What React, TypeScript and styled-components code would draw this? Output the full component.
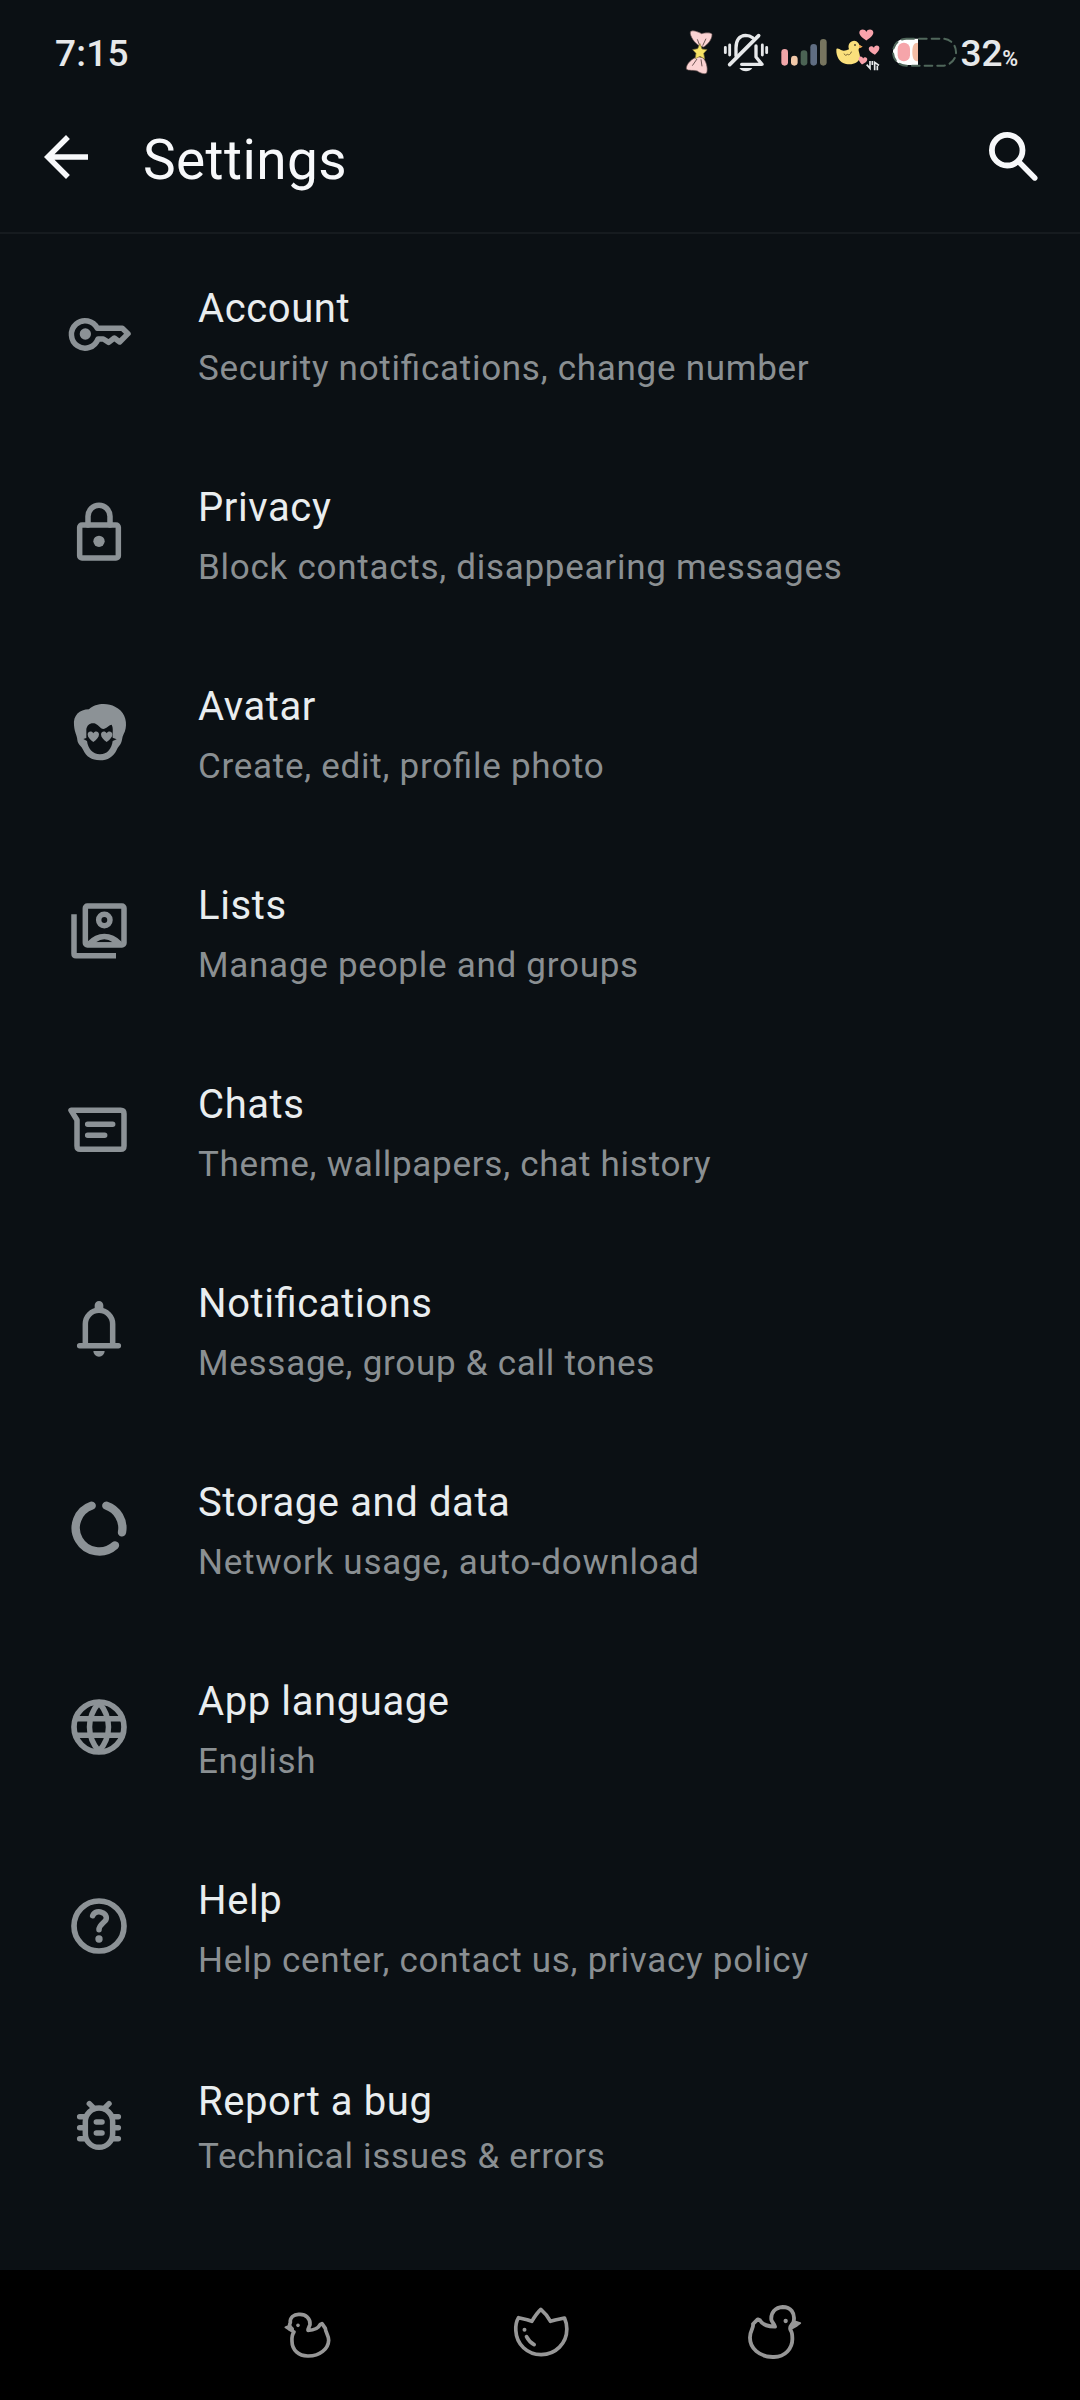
import React from "react";
import styled, { createGlobalStyle } from "styled-components";
import { MdArrowBack } from "react-icons/md";

const GlobalStyle = createGlobalStyle`
  * { box-sizing: border-box; }
  html, body { margin: 0; background: #0b1014; }
  body { font-family: Roboto, "Noto Sans", sans-serif; }
`;

const Screen = styled.div`
  width: 1080px;
  height: 2400px;
  display: flex;
  flex-direction: column;
  overflow: hidden;
  background: #0b1014;
`;

const StatusBar = styled.header`
  height: 96px;
  flex: none;
  display: flex;
  align-items: flex-start;
  justify-content: space-between;
  padding: 0 61px 0 55px;
  color: #e6e8ea;
`;

const Clock = styled.span`
  margin-top: 32px;
  font-size: 37px;
  line-height: 44px;
  font-weight: 500;
  letter-spacing: 0.2px;
`;

const StatusIcons = styled.div`
  display: flex;
  align-items: flex-start;
`;

const StatusGlyph = styled.svg`
  display: block;
  flex: none;
  height: 96px;
`;

const BatteryText = styled.span`
  width: 61px;
  padding-left: 2.5px;
  margin-top: 32px;
  font-size: 37px;
  line-height: 44px;
  font-weight: 500;
  white-space: nowrap;
  letter-spacing: -0.1px;
`;

const Percent = styled.small`
  font-size: 21.5px;
  font-weight: 600;
`;

const AppBar = styled.div`
  height: 138px;
  flex: none;
  display: flex;
  align-items: flex-start;
  padding: 28px 33px 0;
  border-bottom: 2px solid #161b1f;
  color: #f7f8fa;
`;

const BarButton = styled.button`
  width: 66px;
  height: 66px;
  padding: 0;
  border: 0;
  background: none;
  color: inherit;
  svg { display: block; }
`;

const PageTitle = styled.h1`
  flex: 1;
  margin: 4px 0 0 44px;
  font-size: 55px;
  line-height: 64px;
  font-weight: 400;
  letter-spacing: 0.4px;
`;

const SettingsList = styled.ul`
  flex: 1;
  margin: 0;
  padding: 0;
  list-style: none;
`;

const SettingRow = styled.li`
  height: 199px;
  display: flex;
  align-items: center;
  padding-left: 66px;
`;

const RowIcon = styled.svg`
  width: 66px;
  height: 66px;
  flex: none;
  color: #8c9296;
`;

const RowText = styled.div<{ $compact?: boolean }>`
  height: 199px;
  margin-left: 66px;
  padding-top: ${(p) => (p.$compact ? 52 : 50)}px;
  display: flex;
  flex-direction: column;
  gap: ${(p) => (p.$compact ? 7 : 12)}px;
  white-space: nowrap;
  font-feature-settings: "liga" 1;
`;

const RowTitle = styled.span`
  font-size: 40px;
  line-height: 50px;
  letter-spacing: 0.6px;
  color: #e9edef;
`;

const RowSubtitle = styled.span`
  font-size: 35px;
  line-height: 46px;
  letter-spacing: 0.73px;
  color: #8a8f92;
`;

const NavBar = styled.nav`
  height: 130px;
  flex: none;
  display: flex;
  justify-content: space-between;
  padding: 30px 257px 0 270px;
  background: #000;
`;

const NavGlyph = styled.svg`
  width: 80px;
  height: 70px;
  fill: none;
  stroke: #979797;
  stroke-width: 11;
  stroke-linecap: round;
  stroke-linejoin: round;
`;

const line = {
  fill: "none",
  stroke: "currentColor",
  strokeWidth: 16.5,
  strokeLinecap: "round" as const,
  strokeLinejoin: "round" as const,
};

type Setting = {
  title: string;
  subtitle: string;
  viewBox: string;
  icon: React.ReactNode;
  compact?: boolean;
};

const settings: Setting[] = [
  {
    title: "Account",
    subtitle: "Security notifications, change number",
    viewBox: "78 93 198 198",
    icon: (
      <>
        <path {...line} d="M172 175H247L264 191L239 216L223 204L206 217L190 207H174A41 41 0 1 1 172 175Z" />
        <circle cx="136" cy="192" r="17" fill="currentColor" />
      </>
    ),
  },
  {
    title: "Privacy",
    subtitle: "Block contacts, disappearing messages",
    viewBox: "78 690 198 198",
    icon: (
      <>
        <rect {...line} x="119" y="765" width="116" height="99" rx="7" />
        <path {...line} d="M144 765V739A33 33 0 0 1 210 739V765" />
        <circle cx="177" cy="814" r="17" fill="currentColor" />
      </>
    ),
  },
  {
    title: "Avatar",
    subtitle: "Create, edit, profile photo",
    viewBox: "78 87 198 198",
    icon: (
      <>
        <path
          fill="currentColor"
          fillRule="evenodd"
          d="M102 166C99 136 118 119 147 118C165 99 204 98 225 110C251 121 262 150 257 175C255 189 247 196 246 209C243 225 236 226 230 240C220 261 203 271 180 271C154 271 139 260 130 241C124 226 114 225 112 210C111 195 104 190 102 166Z M139 204L130 207L141 213C144 235 158 253 180 253C202 253 215 236 218 213L230 208L218 203C217 188 221 176 215 164C206 165 199 176 190 177C181 177 173 162 163 160C149 158 141 166 139 178Z"
        />
        <path
          fill="currentColor"
          d="M160 216C150 209 143 202 143 193C143 183 156 181 160 190C164 181 177 183 177 193C177 202 170 209 160 216ZM200 216C190 209 183 202 183 193C183 183 196 181 200 190C204 181 217 183 217 193C217 202 210 209 200 216Z"
        />
      </>
    ),
  },
  {
    title: "Lists",
    subtitle: "Manage people and groups",
    viewBox: "78 684 198 198",
    icon: (
      <>
        <rect {...line} x="136" y="708" width="116" height="117" rx="6" />
        <path {...line} strokeLinecap="butt" d="M102 733V851Q102 857 108 857H228" />
        <circle {...line} cx="193" cy="750" r="17" />
        <path
          fill="currentColor"
          fillRule="evenodd"
          d="M142 815Q165 791 193 791Q222 791 245 815V825H142ZM168 817Q193 799 218 817Z"
        />
      </>
    ),
  },
  {
    title: "Chats",
    subtitle: "Theme, wallpapers, chat history",
    viewBox: "78 81 198 198",
    icon: (
      <>
        <path {...line} d="M93 121H242Q252 121 252 131V228Q252 238 242 238H121Q111 238 111 228V150Z" />
        <path {...line} d="M143 163H218M143 196H194" />
      </>
    ),
  },
  {
    title: "Notifications",
    subtitle: "Message, group & call tones",
    viewBox: "78 678 198 198",
    icon: (
      <>
        <path {...line} d="M119 827H235M136 827V762A41 41 0 0 1 218 762V827" />
        <path fill="currentColor" d="M164 722V706A13 13 0 0 1 190 706V722ZM160 843H194A17 17 0 0 1 160 843Z" />
      </>
    ),
  },
  {
    title: "Storage and data",
    subtitle: "Network usage, auto-download",
    viewBox: "78 45 198 198",
    icon: (
      <path
        {...line}
        strokeWidth={25}
        d="M155 77A70.5 70.5 0 1 0 225 196M199 77A70.5 70.5 0 0 1 246 157"
      />
    ),
  },
  {
    title: "App language",
    subtitle: "English",
    viewBox: "78 642 198 198",
    icon: (
      <>
        <circle {...line} cx="177" cy="741" r="75" strokeWidth={17} />
        <path {...line} d="M107 716H247M107 766H247M177 668C139 712 139 770 177 814C215 770 215 712 177 668Z" />
      </>
    ),
  },
  {
    title: "Help",
    subtitle: "Help center, contact us, privacy policy",
    viewBox: "78 69 198 198",
    icon: (
      <>
        <circle {...line} cx="177" cy="168" r="75" strokeWidth={17} />
        <path {...line} d="M158 137C163 124 178 124 184 127C199 131 203 145 195 153C187 162 177 166 177 179" />
        <circle cx="177" cy="207" r="11" fill="currentColor" />
      </>
    ),
  },
  {
    title: "Report a bug",
    subtitle: "Technical issues & errors",
    compact: true,
    viewBox: "78 666 198 198",
    icon: (
      <>
        <rect {...line} x="136" y="714" width="82" height="118" rx="41" />
        <path
          {...line}
          d="M119 740H134M119 773H134M119 806H134M220 740H235M220 773H235M220 806H235M148 701L163 716M207 701L192 716M169 756H186M169 789H186"
        />
      </>
    ),
  },
];

const heart = "M0 9C-7 4-10 0-10-4C-10-10-2-11 0-5C2-11 10-10 10-4C10 0 7 4 0 9Z";

const BowIcon = () => (
  <StatusGlyph width="37" viewBox="68 -30 111 288">
    <g stroke="#6d5654" strokeWidth="2" strokeLinejoin="round">
      <path fill="#fbd3d3" d="M118 108C103 100 88 78 90 66C96 58 113 66 124 71C134 68 152 67 155 73C156 88 141 105 130 111Z" />
      <path fill="#fbd3d3" d="M113 140C97 143 76 162 78 177C84 184 101 179 111 183C117 188 132 194 139 189C144 175 137 151 127 143Z" />
      <path fill="none" d="M111 88L118 106M137 86L127 107M110 147L96 167M122 148L125 169" strokeWidth="3" />
      <path fill="#f8e365" stroke="#8b7b3d" d="M119 101L125 117L140 119L130 130L133 147L119 139L105 146L107 130L97 119L112 116Z" />
    </g>
  </StatusGlyph>
);

const SilentIcon = () => (
  <StatusGlyph width="52" viewBox="180 -30 156 288">
    <g fill="none" stroke="#e6e8ea" strokeWidth="10" strokeLinecap="round" strokeLinejoin="round">
      <path strokeWidth="8.5" d="M196 112V128M209 105V135M307 105V135M320 112V128" />
      <path d="M228 137V114C228 90 239 77 257 76C267 76 272 78 278 83M288 108V141L306 163H245" />
      <path d="M296 77L209 164" strokeWidth="11" />
    </g>
    <path fill="#e6e8ea" d="M238 174H277Q270 184 258 184Q245 184 238 174Z" />
  </StatusGlyph>
);

const SignalIcon = () => (
  <StatusGlyph width="62" viewBox="336 -30 186 288">
    <g strokeWidth="20" strokeLinecap="round">
      <path stroke="#f2a6a9" d="M374 127V157" />
      <path stroke="#f1c8a8" d="M403 147V157" />
      <path stroke="#4b6354" d="M432 131V157" />
      <path stroke="#5f6d82" d="M461 112V157" />
      <path stroke="#77755f" d="M490 97V157" />
    </g>
  </StatusGlyph>
);

const DuckIcon = () => (
  <StatusGlyph width="54" viewBox="522 -30 162 288">
    <path
      fill="#fae07c"
      d="M529 119C529 112 538 116 545 121C552 124 560 121 567 118C562 103 571 92 583 92C592 93 597 100 598 105L607 110L597 115C593 122 600 130 600 142C597 159 577 166 558 162C539 158 528 139 529 119Z"
    />
    <path fill="none" stroke="#796639" strokeWidth="3" strokeLinecap="round" d="M552 132Q557 140 563 133Q569 138 574 126" />
    <circle cx="585" cy="105" r="3" fill="#574b31" />
    <path fill="#efa24e" d="M597 104L608 110L597 115Z" />
    <g fill="#f9a3ac">
      <path transform="translate(619 75) scale(2.1 1.8)" d={heart} />
      <path transform="translate(643 121) rotate(-8) scale(1.6 1.5)" d={heart} />
      <path transform="translate(608 152) rotate(10) scale(1.3)" d={heart} />
    </g>
    <path fill="none" stroke="#e6e8ea" strokeWidth="5" d="M630 153V175L620 164M644 181V157L657 166M637 153V165M652 167V181" />
  </StatusGlyph>
);

const BatteryIcon = () => (
  <StatusGlyph width="70" viewBox="684 -30 210 288">
    <path fill="#fff" d="M774 86H738C712 86 699 103 699 126C699 149 712 165 738 165H774Z" />
    <rect x="713" y="98" width="37" height="56" rx="18" fill="#f6a5aa" />
    <path fill="#f3bda5" d="M774 98C761 98 757 108 757 126C757 144 761 154 774 154Z" />
    <rect
      x="699" y="86" width="189" height="81" rx="40"
      fill="none" stroke="#50675b" strokeWidth="6" strokeDasharray="23 15" strokeLinecap="round"
    />
  </StatusGlyph>
);

export default function App() {
  return (
    <Screen>
      <GlobalStyle />
      <StatusBar>
        <Clock>7:15</Clock>
        <StatusIcons>
          <BowIcon />
          <SilentIcon />
          <SignalIcon />
          <DuckIcon />
          <BatteryIcon />
          <BatteryText>
            32<Percent>%</Percent>
          </BatteryText>
        </StatusIcons>
      </StatusBar>
      <AppBar>
        <BarButton aria-label="Back">
          <MdArrowBack size={66} />
        </BarButton>
        <PageTitle>Settings</PageTitle>
        <BarButton aria-label="Search">
          <svg width="66" height="66" viewBox="981 124 66 66" fill="none" stroke="currentColor" strokeLinecap="round">
            <circle cx="1007.2" cy="150.2" r="15.3" strokeWidth="5.8" />
            <path strokeWidth="5.4" d="M1018.5 161.5L1034.8 178" />
          </svg>
        </BarButton>
      </AppBar>
      <SettingsList>
        {settings.map((s) => (
          <SettingRow key={s.title}>
            <RowIcon viewBox={s.viewBox}>{s.icon}</RowIcon>
            <RowText $compact={s.compact}>
              <RowTitle>{s.title}</RowTitle>
              <RowSubtitle>{s.subtitle}</RowSubtitle>
            </RowText>
          </SettingRow>
        ))}
      </SettingsList>
      <NavBar>
        <NavGlyph viewBox="0 30 240 210">
          <path d="M67 121C57 112 58 103 61 98C59 83 71 72 88 73C107 72 122 86 120 104C118 110 113 117 114 121C128 121 144 118 151 103L156 101L166 115C166 126 176 135 176 151C175 176 150 199 113 198C86 198 66 180 66 154C65 140 67 132 72 126" />
          <path fill="#979797" strokeWidth="5" d="M60 106L46 112L56 119L70 127L69 115Z" />
          <circle cx="84" cy="106" r="3.5" fill="#979797" strokeWidth="4" />
        </NavGlyph>
        <NavGlyph viewBox="709.5 30 240 210">
          <path d="M811 58C799 69 791 82 784 94L770 89L744 83C738 93 735 107 736 122C738 163 770 194 812 194C856 193 889 160 889 117C889 104 886 93 882 84L854 90L840 94C833 81 824 69 811 58Z" />
          <circle cx="762" cy="119" r="3" fill="#979797" strokeWidth="6" />
          <path d="M768 140Q776 156 791 164" />
        </NavGlyph>
        <NavGlyph viewBox="68 120 240 210">
          <path strokeWidth="11.5" d="M211 211C204 198 218 194 220 184C225 159 211 141 187 141C165 142 151 158 153 179C155 187 162 192 164 200C145 199 128 197 119 181L112 178L98 192C101 205 88 212 89 234C89 264 116 290 157 291C195 293 217 264 216 235C216 222 215 216 211 211" />
          <path fill="#979797" strokeWidth="5" d="M223 184L240 189L230 197L214 206L216 194Z" />
          <circle cx="196" cy="183" r="4.5" fill="#979797" strokeWidth="4" />
        </NavGlyph>
      </NavBar>
    </Screen>
  );
}
